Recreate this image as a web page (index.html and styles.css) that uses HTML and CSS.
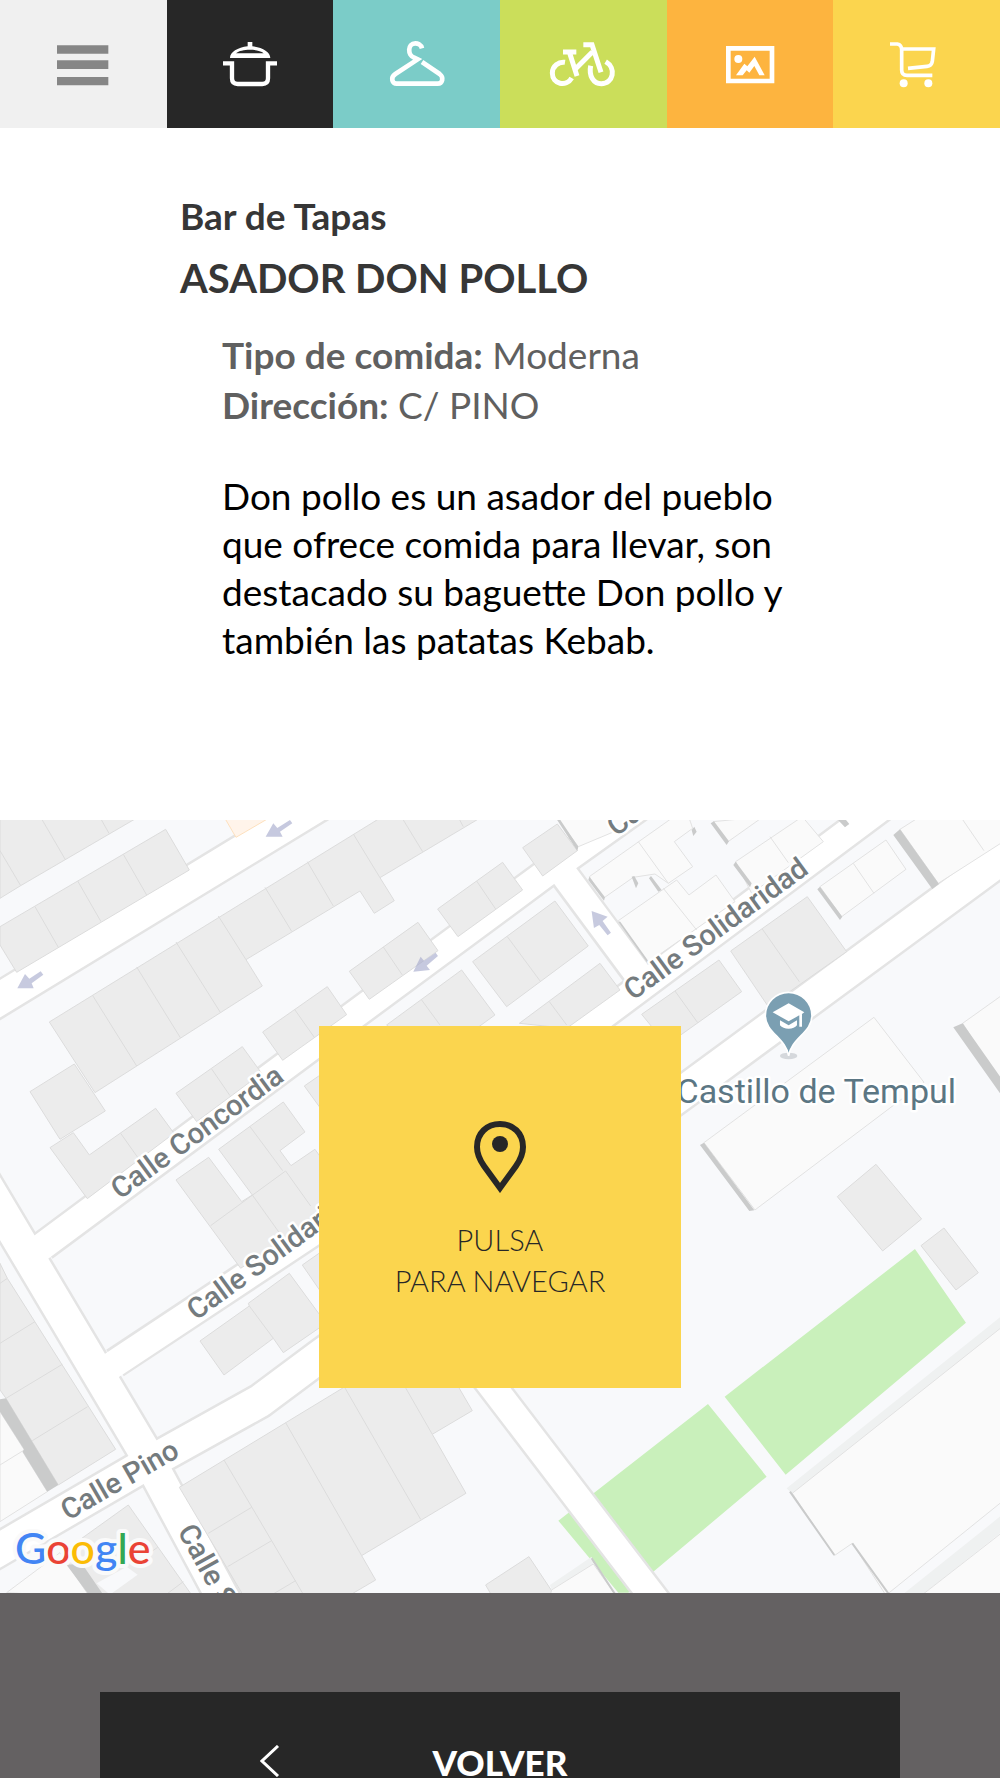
FILE: index.html
```html
<!DOCTYPE html>
<html lang="es">
<head>
  <meta charset="utf-8">
  <title>Asador Don Pollo</title>
  <meta name="viewport" content="width=device-width, initial-scale=1.0">
  <link rel="stylesheet" href="styles.css">
</head>
<body>

  <nav class="menu">
    <button class="tab tab-menu" type="button" aria-label="Menú">
      <svg class="icon" viewBox="145 120 210 144"><path d="M172 136h154v25H172zM172 181h154v26H172zM172 231h154v25H172z" fill="#868686"/></svg>
    </button>
    <a class="tab tab-food" href="#comer" aria-label="Comer">
      <svg class="icon" viewBox="645 120 210 144">
        <path d="M743 126h14v13c30 3 54 18 54 35H690c0-17 23-32 53-35zM708 160h83c-16-14-67-14-83 0z" fill="#fff" fill-rule="evenodd"/>
        <path d="M669 190h27v45q0 17 17 17h74q17 0 17-17v-45h27" fill="none" stroke="#fff" stroke-width="13"/>
      </svg>
    </a>
    <a class="tab tab-clothes" href="#ropa" aria-label="Ropa">
      <svg class="icon" viewBox="1145 120 210 144">
        <path d="M1265 145c-3-12-14-15-20-15-24 0-24 36-3 43l10 5-67 44c-17 12-8 29 4 29h123c14 0 20-18 6-29l-53-36" fill="none" stroke="#fff" stroke-width="14"/>
      </svg>
    </a>
    <a class="tab tab-sport" href="#deporte" aria-label="Deporte">
      <svg class="icon" viewBox="145 120 210 144" fill="none" stroke="#fff" stroke-width="15">
        <path d="M196 187c-19-3-38 12-38 32 0 34 42 43 58 15M190 156h40M209 156l23 72M228 206l50-50M251 134h26l27 83M273 197c-6 30 8 54 32 54 36 0 46-47 13-66"/>
      </svg>
    </a>
    <a class="tab tab-photo" href="#galeria" aria-label="Galería">
      <svg class="icon" viewBox="645 120 210 144">
        <path d="M685 145h131v98H685z" fill="none" stroke="#fff" stroke-width="14"/>
        <circle cx="715" cy="177" r="12" fill="#fff"/>
        <path d="M708 226l25-35 9 8 22-29 30 56h-16l-15-28-15 20-8-7-12 15z" fill="#fff"/>
      </svg>
    </a>
    <a class="tab tab-shop" href="#tiendas" aria-label="Tiendas">
      <svg class="icon" viewBox="1145 120 210 144">
        <path d="M1169 132h22q13 2 13 18v60q0 16 16 16h76M1204 147h96l-4 37q-2 14-16 15l-57 6" fill="none" stroke="#fff" stroke-width="11"/>
        <circle cx="1210" cy="250" r="12" fill="#fff"/><circle cx="1284" cy="250" r="12" fill="#fff"/>
      </svg>
    </a>
  </nav>

  <main class="info">
    <p class="kind">Bar de Tapas</p>
    <h1>ASADOR DON POLLO</h1>
    <div class="details">
      <p class="data"><strong>Tipo de comida:</strong> Moderna</p>
      <p class="data"><strong>Dirección:</strong> C/ PINO</p>
      <p class="text">Don pollo es un asador del pueblo que ofrece comida para llevar, son destacado su baguette Don pollo y también las patatas Kebab.</p>
    </div>
  </main>

  <section class="map">
    <svg class="map-draw" viewBox="0 820 1000 773" preserveAspectRatio="xMidYMid slice">
      <rect class="land" y="820" width="1000" height="773"/>

      <!-- green areas -->
      <g class="green" transform="translate(500 1200) scale(.3333)">
        <path d="M1245 147l153 221-541 456-183-234zM175 962l449-350 176 218-415 348h-30z"/>
      </g>

      <!-- streets: grey edge first, then the white road -->
      <g class="edge">
        <path d="M-20 1011L320 804M-20 1175L143 1449 225 1602M-10 1555L136 1470 260 1401 319 1357 681 1094 1010 852" stroke-width="37"/>
        <path d="M43 1246L319 1041 545 874 640 806M115 1363L319 1228 590 1025 890 801M565 876L636 972M485 1377L660 1606" stroke-width="32"/>
      </g>
      <g class="road">
        <path d="M-20 1011L320 804M-20 1175L143 1449 225 1602M-10 1555L136 1470 260 1401 319 1357 681 1094 1010 852" stroke-width="32"/>
        <path d="M32 1254L319 1041 545 874 640 806M105 1370L319 1228 590 1025 890 801M560 869L640 977M485 1377L660 1606" stroke-width="27"/>
      </g>

      <!-- north west -->
      <g transform="translate(0 810) scale(.3333)">
        <path class="shop" d="M672 20h142l-106 62z"/>
        <g class="house">
          <path d="M0 20h417L62 227l-62 38zM121 20l74 127M299 20l28 50M0 122l62 105"/>
          <path d="M0 350L497 58l71 122L50 487 0 405zM105 290l70 122M233 213l70 122M370 133l70 122"/>
          <path d="M148 636L1147 20h300L1140 203l43 69-60 38-43-67-342 206 49 79-502 320zM277 555l133 213M410 471l131 212M528 396l133 211M655 318l83 131M795 232l80 132M922 155l78 133M1060 72l80 131M1204 20l64 105M1374 20l16 30"/>
          <path d="M90 845l133-83 93 141-136 85z"/>
          <path d="M150 1013l70-45 48 67 199-140 55 75-260 196zM362 970l53 75"/>
          <path d="M528 850l199-140 58 80-195 145zM635 777l55 80"/>
          <path d="M788 666l194-136 58 84-192 137zM885 600l58 82"/>
          <path d="M1048 484l206-147 60 85-206 146zM1150 411l57 84"/>
          <path d="M1313 297l195-140 60 83-194 140zM1430 213l57 84"/>
          <path d="M1418 455l247-182 100 135-245 182zM1522 380l100 135"/>
          <path d="M1160 645l225-165 100 135-185 135zM1265 570l55 75"/>
          <path d="M913 828l87-60v180z"/>
          <path d="M528 1110l98-68 99 133 32-20-101-137 194-142 65 90-75 56 33 45 72-49 75 105v60l-298 192zM750 950l98 132M632 1247l225-164M857 1083l75 105M757 1155l80 112"/>
        </g>
      </g>

      <!-- north east -->
      <g transform="translate(500 810) scale(.3333)">
        <g class="house">
          <path d="M68 113l104-71 60 80-104 76zM58 640l242-180 60 80-160 115zM148 575l52 70M425 613l232-163 68 95-225 160zM525 543l68 95M692 423l230-163 118 165-235 165zM787 357l111 158M1012 1160l116-97 137 164-117 96z"/>
        </g>
        <g class="block">
          <path d="M168 20h282L235 110zM268 200l254-180h44l12 35-55 40 55 75-73 50-40-28-65 10-90 63zM415 95l90 125"/>
          <path d="M355 332l175-122 37 45 81-60 57 80-260 182zM490 235l100 125M640 35l150-15-110 78zM707 155l200-135 63 75-215 155zM810 80l55 78"/>
          <path d="M960 230l198-140 60 88-193 142zM1060 160l62 90M1200 58l60-38h250v75l-195 125zM1382 20l70 102"/>
          <path d="M612 998l510-376 150 195-507 383zM1388 640l122-87v280z"/>
        </g>
        <path class="shade" d="M165 20l12 4 58 86-3 13zM268 200l47 62-3 10-47-62zM395 200l8-2 12 22-7 15zM447 205l6-7 32 42-10 5zM575 60l8-10 7 15-10 13zM632 40l10-6 45 60-7 11zM707 155l48 65-5 12-50-67zM355 335l6 0 84 118-5 3zM960 230l67 90-7 10-68-92zM1200 58l117 164-20 15-117-162zM612 998l151 203-15 2-148-198zM1388 640l122 174v50l-150-212zM1005 20h25l18 22-13 10z"/>
      </g>

      <!-- south west -->
      <g transform="translate(0 1200) scale(.3333)">
        <g class="house">
          <path d="M0 190l22 45 325 513-172 107L18 595 0 570zM0 250l22-15M0 430l105-65M18 595l169-102M97 722l166-102"/>
          <path d="M600 423l148-105-3-8 123-90 110 150-128 88-30-43-148 110zM748 318l72 97M907 195l93-65v200z"/>
          <path d="M538 862L1055 548h313l49 84-120 71 101 177-313 187 42 73-85 50H732zM672 780l242 410M857 668l228 399M1027 550l235 408M1208 548l89 155M625 1000l130-78M683 1100l132-78M810 1188l77-46"/>
          <path d="M180 1062l205-147 195 277H300zM405 1090l68-48M490 1190l60-45M1457 1155l130-85 80 120h-190z"/>
        </g>
        <path class="land" d="M290 1150l90-50 33 24-83 60z"/>
        <g class="block">
          <path d="M0 635l72 113-4 7 74 120-142 90zM0 795l68-42M20 1178l160-120 90 134z"/>
        </g>
        <path class="shade" d="M0 598l18-3 157 260-33 20-74-120 4-7L0 635zM200 1095l45-5 70 102h-43z"/>
      </g>

      <!-- south east -->
      <g transform="translate(500 1200) scale(.3333)">
        <path class="house" d="M1263 137l69-53 103 134-67 52z"/>
        <path class="wall" d="M860 865l650-521v41L877 882zM1200 1190l310-248v50l-250 198zM150 1155l125-85 5 22-125 78z"/>
        <path class="block" d="M877 880l633-502v524l-352 284-101-156-54 37zM1260 1190l250-195v195zM155 1170l125-78 70 98H150z"/>
        <path class="shade-line" d="M870 875l133 190M1057 1030l115 160M275 1075l75 115"/>
      </g>

      <!-- one way arrows -->
      <g class="arrow" transform="translate(0 810) scale(.3333)">
        <path d="M797 80l23-40 12 14 38-24 7 10-37 25 8 15z"/>
        <path d="M52 535l23-43 13 14 34-22 8 10-35 26 6 15zM1240 485l22-45 10 12 35-24 7 10-34 29 10 13zM1775 303l48 17-15 13 25 35-10 8-25-31-16 9z"/>
      </g>

      <g class="street">
        <text transform="translate(120 1200) rotate(-36)">Calle Concordia</text>
        <text transform="translate(616 837) rotate(-36)">Calle Concordia</text>
        <text transform="translate(633 1001) rotate(-36)">Calle Solidaridad</text>
        <text transform="translate(196 1321) rotate(-36)">Calle Solidaridad</text>
        <text transform="translate(68 1521) rotate(-30)">Calle Pino</text>
        <text transform="translate(177 1531) rotate(61)">Calle Solidaridad</text>
      </g>

      <g transform="translate(500 810) scale(.3333)">
        <ellipse cx="866" cy="738" rx="26" ry="10" fill="#d5d8dc"/>
        <path d="M866 738c-8-54-70-70-70-121a70 70 0 1 1 140 0c0 51-62 67-70 121z" fill="#7b9fb2" stroke="#fff" stroke-width="5"/>
        <path d="M818 607l48-27 47 27v0l-7 5v38h-8v-34l-32 18zM840 631l26 15 25-15v15q-8 10-25 10t-26-10z" fill="#fff"/>
      </g>
      <text class="place" x="956" y="1103">Castillo de Tempul</text>

      <text class="google" x="15" y="1564"><tspan fill="#4285f4">G</tspan><tspan fill="#ea4335">o</tspan><tspan fill="#fbbc05">o</tspan><tspan fill="#4285f4">g</tspan><tspan fill="#34a853">l</tspan><tspan fill="#ea4335">e</tspan></text>
    </svg>

    <button class="navigate" type="button">
      <svg width="52" height="72" viewBox="0 0 52 72">
        <path d="M26 67L10 45Q3 35 3 26C3 12 13 3 26 3s23 9 23 23q0 9-7 19z" fill="none" stroke="#272727" stroke-width="6"/>
        <circle cx="26" cy="23" r="8" fill="#272727"/>
      </svg>
      <span>PULSA<br>PARA NAVEGAR</span>
    </button>
  </section>

  <footer class="bottom">
    <button class="back" type="button">
      <svg class="back-arrow" width="20" height="32" viewBox="0 0 20 32"><path d="M18 1L2 16l16 15" fill="none" stroke="#fff" stroke-width="3"/></svg>
      VOLVER
    </button>
  </footer>

</body>
</html>
```

FILE: styles.css
```css
* {
  box-sizing: border-box;
}

body {
  margin: 0;
  height: 100vh;
  overflow: hidden;
  display: flex;
  flex-direction: column;
  background-color: white;
  font-family: Lato, "Open Sans", sans-serif;
}

h1, p {
  margin: 0;
}

button {
  border: 0;
  border-radius: 0;
  font-family: inherit;
  cursor: pointer;
}

/* top menu */
.menu {
  display: flex;
  flex: none;
}

.tab {
  flex: 1;
  height: 128px;
  padding: 0;
  display: flex;
  justify-content: center;
  align-items: center;
}

.icon {
  width: 70px;
  height: 48px;
}

.tab-menu { background-color: #f0f0f0; }
.tab-food { background-color: #272727; }
.tab-clothes { background-color: #7bccc8; }
.tab-sport { background-color: #cbde5a; }
.tab-photo { background-color: #fdb43f; }
.tab-shop { background-color: #fbd54e; }

/* place info */
.info {
  flex: none;
  padding: 62px 18% 156px;
}

.kind {
  color: #363636;
  font-size: 37px;
  line-height: 52px;
  font-weight: bold;
}

h1 {
  margin-top: 8px;
  color: #363636;
  font-size: 40px;
  line-height: 56px;
  font-weight: bold;
}

.details {
  padding: 24px 0 0 42px;
}

.data {
  color: #606060;
  font-size: 37px;
  line-height: 50px;
}

.text {
  margin-top: 42px;
  color: black;
  font-size: 37px;
  line-height: 48px;
}

/* map */
.map {
  flex: none;
  display: grid;
  place-items: center;
}

.map-draw, .navigate {
  grid-area: 1 / 1;
}

.map-draw {
  display: block;
  width: 100%;
}

.land { fill: #f8f9fb; }
.green { fill: #c9f0bb; }
.edge, .road {
  fill: none;
  stroke-linejoin: round;
}
.edge { stroke: #e4e4e4; }
.road { stroke: white; }
.house {
  fill: #ececec;
  stroke: #dcdcdc;
  stroke-width: 3px;
}
.block {
  fill: #fafafa;
  stroke: #e2e2e2;
  stroke-width: 3px;
}
.shop {
  fill: #fff4ea;
  stroke: #fde0bd;
  stroke-width: 3px;
}
.wall { fill: #eff1f1; }
.shade { fill: #cacbcb; }
.shade-line {
  fill: none;
  stroke: #cacbcb;
  stroke-width: 6px;
}
.arrow {
  fill: #a9adce;
  opacity: .65;
}

.street, .place {
  font-family: Roboto, sans-serif;
  stroke: white;
  stroke-width: 5px;
  stroke-linejoin: round;
  paint-order: stroke;
}

.street {
  fill: #747b7e;
  font-size: 29px;
  font-weight: 500;
}

.place {
  fill: #5b7683;
  font-size: 34px;
  text-anchor: end;
}

.google {
  font-family: Lato, sans-serif;
  font-size: 43px;
  font-weight: 500;
  stroke: #fafafa;
  stroke-width: 8px;
  stroke-linejoin: round;
  paint-order: stroke;
}

.navigate {
  width: 362px;
  height: 362px;
  padding: 8px 0 0;
  display: flex;
  flex-direction: column;
  justify-content: center;
  align-items: center;
  gap: 26px;
  background-color: #fbd54e;
  color: #272727;
  font-size: 29px;
  line-height: 41px;
  font-weight: 300;
}

/* back button */
.bottom {
  flex: 1;
  min-height: 0;
  padding-top: 99px;
  overflow: hidden;
  background-color: #646162;
}

.back {
  position: relative;
  display: block;
  width: 80%;
  height: 140px;
  margin: 0 auto;
  background-color: #272727;
  color: white;
  font-size: 35px;
  font-weight: 900;
}

.back-arrow {
  position: absolute;
  left: 20%;
  top: 53px;
}
```
